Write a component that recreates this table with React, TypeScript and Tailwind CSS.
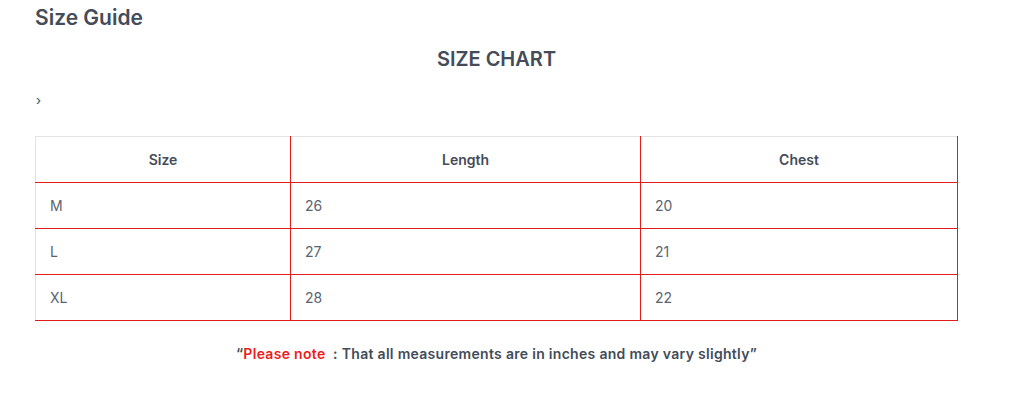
const rows = [
  { size: 'M', length: '26', chest: '20' },
  { size: 'L', length: '27', chest: '21' },
  { size: 'XL', length: '28', chest: '22' },
]

const App = () => {
  return (
    <div className="h-[401px] w-[1024px] bg-white font-['Inter',sans-serif] text-[#434c58]">
      <div className="ml-[35px] w-[923px]">
        <h2 className="pt-[5px] text-[21px] font-semibold leading-[26px]">Size Guide</h2>
        <h3 className="mt-[13px] text-center text-[20px] font-semibold leading-[30px]">SIZE CHART</h3>
        <div className="mt-[18px] pl-[1px] text-[13px] leading-[16px]">›</div>
        <table className="mt-[28px] w-full border-collapse text-[14px]">
          <colgroup>
            <col className="w-[255px]" />
            <col className="w-[350px]" />
            <col />
          </colgroup>
          <thead>
            <tr className="h-[46px]">
              <th className="border-t border-l border-t-[#e3e3e3] border-l-[#e3e3e3] border-r border-b border-r-[#e21b1b] border-b-[#e21b1b] font-semibold">
                Size
              </th>
              <th className="border-t border-t-[#e3e3e3] border-r border-b border-r-[#e21b1b] border-b-[#e21b1b] font-semibold">
                Length
              </th>
              <th className="border-t border-t-[#e3e3e3] border-r border-b border-r-[#e21b1b] border-b-[#e21b1b] font-semibold">
                Chest
              </th>
            </tr>
          </thead>
          <tbody className="text-[#5b6370]">
            {rows.map((row) => (
              <tr key={row.size} className="h-[46px]">
                <td className="border-l border-l-[#e3e3e3] border-r border-b border-[#e21b1b] px-[14px]">{row.size}</td>
                <td className="border-r border-b border-[#e21b1b] px-[14px]">{row.length}</td>
                <td className="border-r border-b border-[#e21b1b] px-[14px]">{row.chest}</td>
              </tr>
            ))}
          </tbody>
        </table>
        <p className="mt-[22px] text-center text-[14px] font-semibold tracking-[0.3px]">
          “<span className="text-[#ee1c1c]">Please note</span>&nbsp; : That all measurements are in inches and may vary slightly”
        </p>
      </div>
    </div>
  )
}

export default App
